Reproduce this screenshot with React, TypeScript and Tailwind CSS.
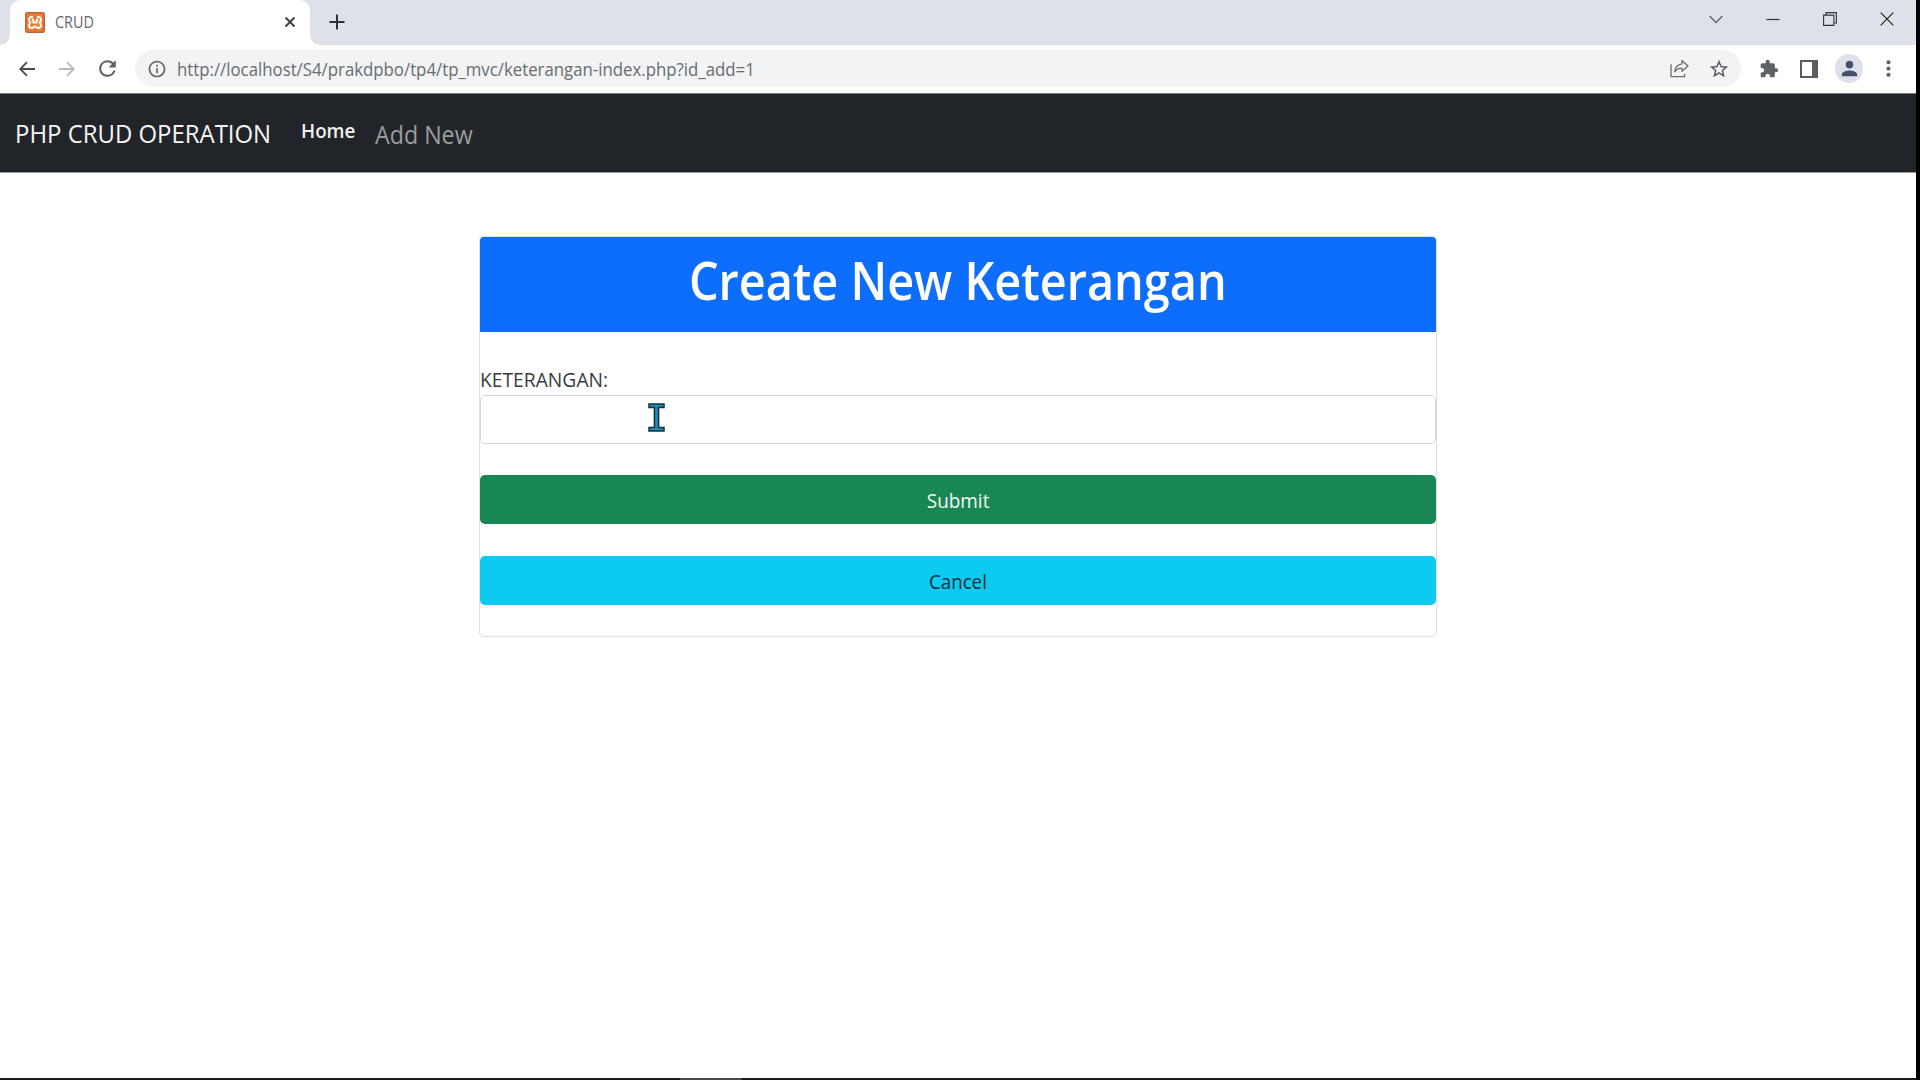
import { MdExtension, MdStarBorder, MdPerson, MdMoreVert, MdRefresh, MdInfoOutline } from "react-icons/md";

function Favicon() {
  return (
    <svg className="h-[21px] w-5 shrink-0" viewBox="0 0 20 21">
      <rect x="0.75" y="0.75" width="18.5" height="19.5" rx="1.5" fill="#f07a28" stroke="#b9683c" strokeWidth="1.5" />
      <path
        d="M7.2 5C5.2 4.7 4 6 4 7.6C4 9 4.8 9.8 5.4 10.5C4.6 11.2 4 12 4 13.3C4 15 5.2 16 6.8 16C8.8 16 8.2 14.6 10 14.6C11.8 14.6 11.2 16 13.2 16C14.8 16 16 15 16 13.3C16 12 15.4 11.2 14.6 10.5C15.2 9.8 16 9 16 7.6C16 6 14.8 4.7 12.8 5M7.4 7.6C8.6 7.6 8.6 10.3 8.2 10.5H11.8C11.4 10.3 11.4 7.6 12.6 7.6"
        fill="none"
        stroke="#fff"
        strokeWidth="2"
        strokeLinejoin="round"
        strokeLinecap="round"
      />
    </svg>
  );
}

function TabStrip() {
  return (
    <div className="flex h-[45px] items-start bg-[#dee1e9]">
      <div className="h-[45px] w-[10px] shrink-0 bg-white">
        <div className="h-full w-full rounded-br-[10px] bg-[#dee1e9]" />
      </div>
      <div className="flex h-[45px] w-[300px] shrink-0 items-center rounded-t-[10px] bg-white pr-[14px] pb-[1px] pl-[15px]">
        <Favicon />
        <span className="mb-[1px] ml-[10px] flex-1 origin-left scale-x-[0.93] text-[15.5px] leading-5 text-[#66686c]">CRUD</span>
        <svg className="h-3 w-3" viewBox="0 0 12 12">
          <path d="M1.5 1.5L10.5 10.5M10.5 1.5L1.5 10.5" stroke="#3c4043" strokeWidth="1.9" />
        </svg>
      </div>
      <div className="h-[45px] w-[10px] shrink-0 bg-white">
        <div className="h-full w-full rounded-bl-[10px] bg-[#dee1e9]" />
      </div>
      <svg className="mt-[14px] ml-[9px] h-4 w-4" viewBox="0 0 16 16">
        <path d="M8 0.5V15.5M0.5 8H15.5" stroke="#303236" strokeWidth="2" />
      </svg>
      <div className="flex-1" />
      <svg className="mt-[15px] mr-[43px] h-[9px] w-[14px]" viewBox="0 0 14 9">
        <path d="M0.7 1L7 7.6L13.3 1" fill="none" stroke="#55585d" strokeWidth="1.2" />
      </svg>
      <svg className="mt-[18px] mr-[43px] h-[3px] w-[14px]" viewBox="0 0 14 3">
        <path d="M0.5 1.5H13.5" stroke="#333" strokeWidth="1.2" />
      </svg>
      <svg className="mt-[12px] mr-[43px] h-[14px] w-[14px]" viewBox="0 0 14 14">
        <path d="M0.6 3.1H10.9V13.4H0.6ZM3 3V0.6H13.4V11H11" fill="none" stroke="#333" strokeWidth="1.1" />
      </svg>
      <svg className="mt-[12px] mr-[22px] h-[14px] w-[14px]" viewBox="0 0 14 14">
        <path d="M0.7 0.7L13.3 13.3M13.3 0.7L0.7 13.3" stroke="#222" strokeWidth="1.2" />
      </svg>
    </div>
  );
}

function Arrow({ className }: { className: string }) {
  return (
    <svg className={className} viewBox="0 0 16 16" fill="none" stroke="currentColor" strokeWidth="1.8">
      <path d="M8 1.2L1.3 8L8 14.8M1.5 8H16" />
    </svg>
  );
}

function ShareIcon() {
  return (
    <svg className="h-[19px] w-[19px] shrink-0" viewBox="0 0 19 19" fill="none" stroke="#6a6d71" strokeWidth="1.3">
      <path d="M1 5.2V17.6H14.6V14.8" />
      <path d="M12 1.6L18 7L12 12.2V9.2C8.6 9.2 6.4 10.4 4.6 12.8C5.2 8.6 7.6 5.4 12 4.8Z" strokeLinejoin="round" />
    </svg>
  );
}

function Toolbar() {
  return (
    <div className="flex h-[48px] items-center bg-white pb-[1px] text-[#5f6368]">
      <Arrow className="ml-[19px] h-4 w-4 shrink-0 text-[#4a4d51]" />
      <Arrow className="ml-[24px] h-4 w-4 shrink-0 rotate-180 text-[#b9bbbe]" />
      <MdRefresh className="ml-[20px] h-[25px] w-[25px] shrink-0" />
      <div className="ml-[15px] flex h-[37px] w-[1606px] shrink-0 items-center rounded-full bg-[#f1f3f4]">
        <MdInfoOutline className="ml-[12px] h-[20px] w-[20px] shrink-0" />
        <span className="ml-[10px] flex-1 origin-left scale-x-[0.933] text-[18px] leading-6 whitespace-nowrap text-[#6a6d71]">
          http://localhost/S4/prakdpbo/tp4/tp_mvc/keterangan-index.php?id_add=1
        </span>
        <ShareIcon />
        <MdStarBorder className="mr-[11px] ml-[19px] h-[22px] w-[22px] shrink-0 text-[#55585c]" />
      </div>
      <MdExtension className="ml-[18px] h-[20px] w-[20px] shrink-0" />
      <div className="ml-[21px] h-[18px] w-[18px] shrink-0 border-2 border-r-[6px] border-[#5b5b62]" />
      <div className="ml-[17px] flex h-[29px] w-[28px] shrink-0 items-center justify-center rounded-full bg-[#dee1e9]">
        <MdPerson className="h-[23px] w-[23px] text-[#47506b]" />
      </div>
      <MdMoreVert className="ml-[13px] h-[25px] w-[25px] shrink-0" />
    </div>
  );
}

function Navbar() {
  return (
    <nav className="flex h-[80px] items-start border-t border-b border-t-[#77797a] border-b-[#9a9b9c] bg-[#212529] pl-[15px] whitespace-nowrap">
      <a className="mt-[19px] h-10 w-[287px] origin-left scale-x-[0.92] text-[26px] leading-10 text-[#f5f5f5]">
        PHP CRUD OPERATION
      </a>
      <a className="mt-[22px] -ml-px h-[30px] w-[73px] origin-left scale-x-[0.94] text-[20px] leading-[30px] font-semibold text-[#f0f0f0]">
        Home
      </a>
      <a className="mt-[21px] ml-[1px] h-[38px] origin-left scale-x-[0.929] text-[25px] leading-[38px] text-[#9b9d9f]">
        Add New
      </a>
    </nav>
  );
}

function KeteranganForm() {
  return (
    <form className="mx-auto mt-[63px] h-[401px] w-[958px] rounded-[5px] border border-[#dfdfdf]">
      <h1 className="h-[95px] rounded-t-[4px] bg-[#0d6efd] pt-[11px] text-center text-[52px] leading-[64px] font-semibold text-white">
        <span className="inline-block scale-x-[0.9]">Create New Keterangan</span>
      </h1>
      <label className="mt-[33px] block h-[30px] origin-left scale-x-[0.963] text-[20px] leading-[30px] text-[#383c40]">
        KETERANGAN:
      </label>
      <input className="block h-[49px] w-full rounded-[5px] border border-[#d5d8db] bg-white outline-none" />
      <button
        type="button"
        className="mt-[31px] block h-[49px] w-full rounded-[5px] bg-[#198754] pt-[2px] text-[20px] leading-[30px] text-[#f2f8f5]"
      >
        <span className="inline-block scale-x-[0.946]">Submit</span>
      </button>
      <button
        type="button"
        className="mt-[32px] block h-[49px] w-full rounded-[5px] bg-[#0dcaf0] pt-[2px] text-[20px] leading-[30px] text-[#0b2f38]"
      >
        <span className="inline-block scale-x-[0.936]">Cancel</span>
      </button>
    </form>
  );
}

function TextCursor() {
  return (
    <svg className="absolute top-[403px] left-[648px] h-[29px] w-[17px]" viewBox="0 0 17 29">
      <path
        d="M1 1H16V4.6H10.6V24.4H16V28H1V24.4H6.4V4.6H1Z"
        fill="#1e8fb4"
        stroke="#12303c"
        strokeWidth="1.5"
      />
    </svg>
  );
}

export default function App() {
  return (
    <div className="relative flex h-[1080px] w-[1920px] flex-col overflow-hidden bg-black font-['Open_Sans',sans-serif]">
      <div className="h-[1078px] w-[1916px] bg-white">
        <TabStrip />
        <Toolbar />
        <Navbar />
        <KeteranganForm />
      </div>
      <div className="flex h-[2px] w-[1916px] bg-[#1c191a]">
        <div className="ml-[680px] w-[62px] bg-[#4a4748]" />
      </div>
      <TextCursor />
    </div>
  );
}
